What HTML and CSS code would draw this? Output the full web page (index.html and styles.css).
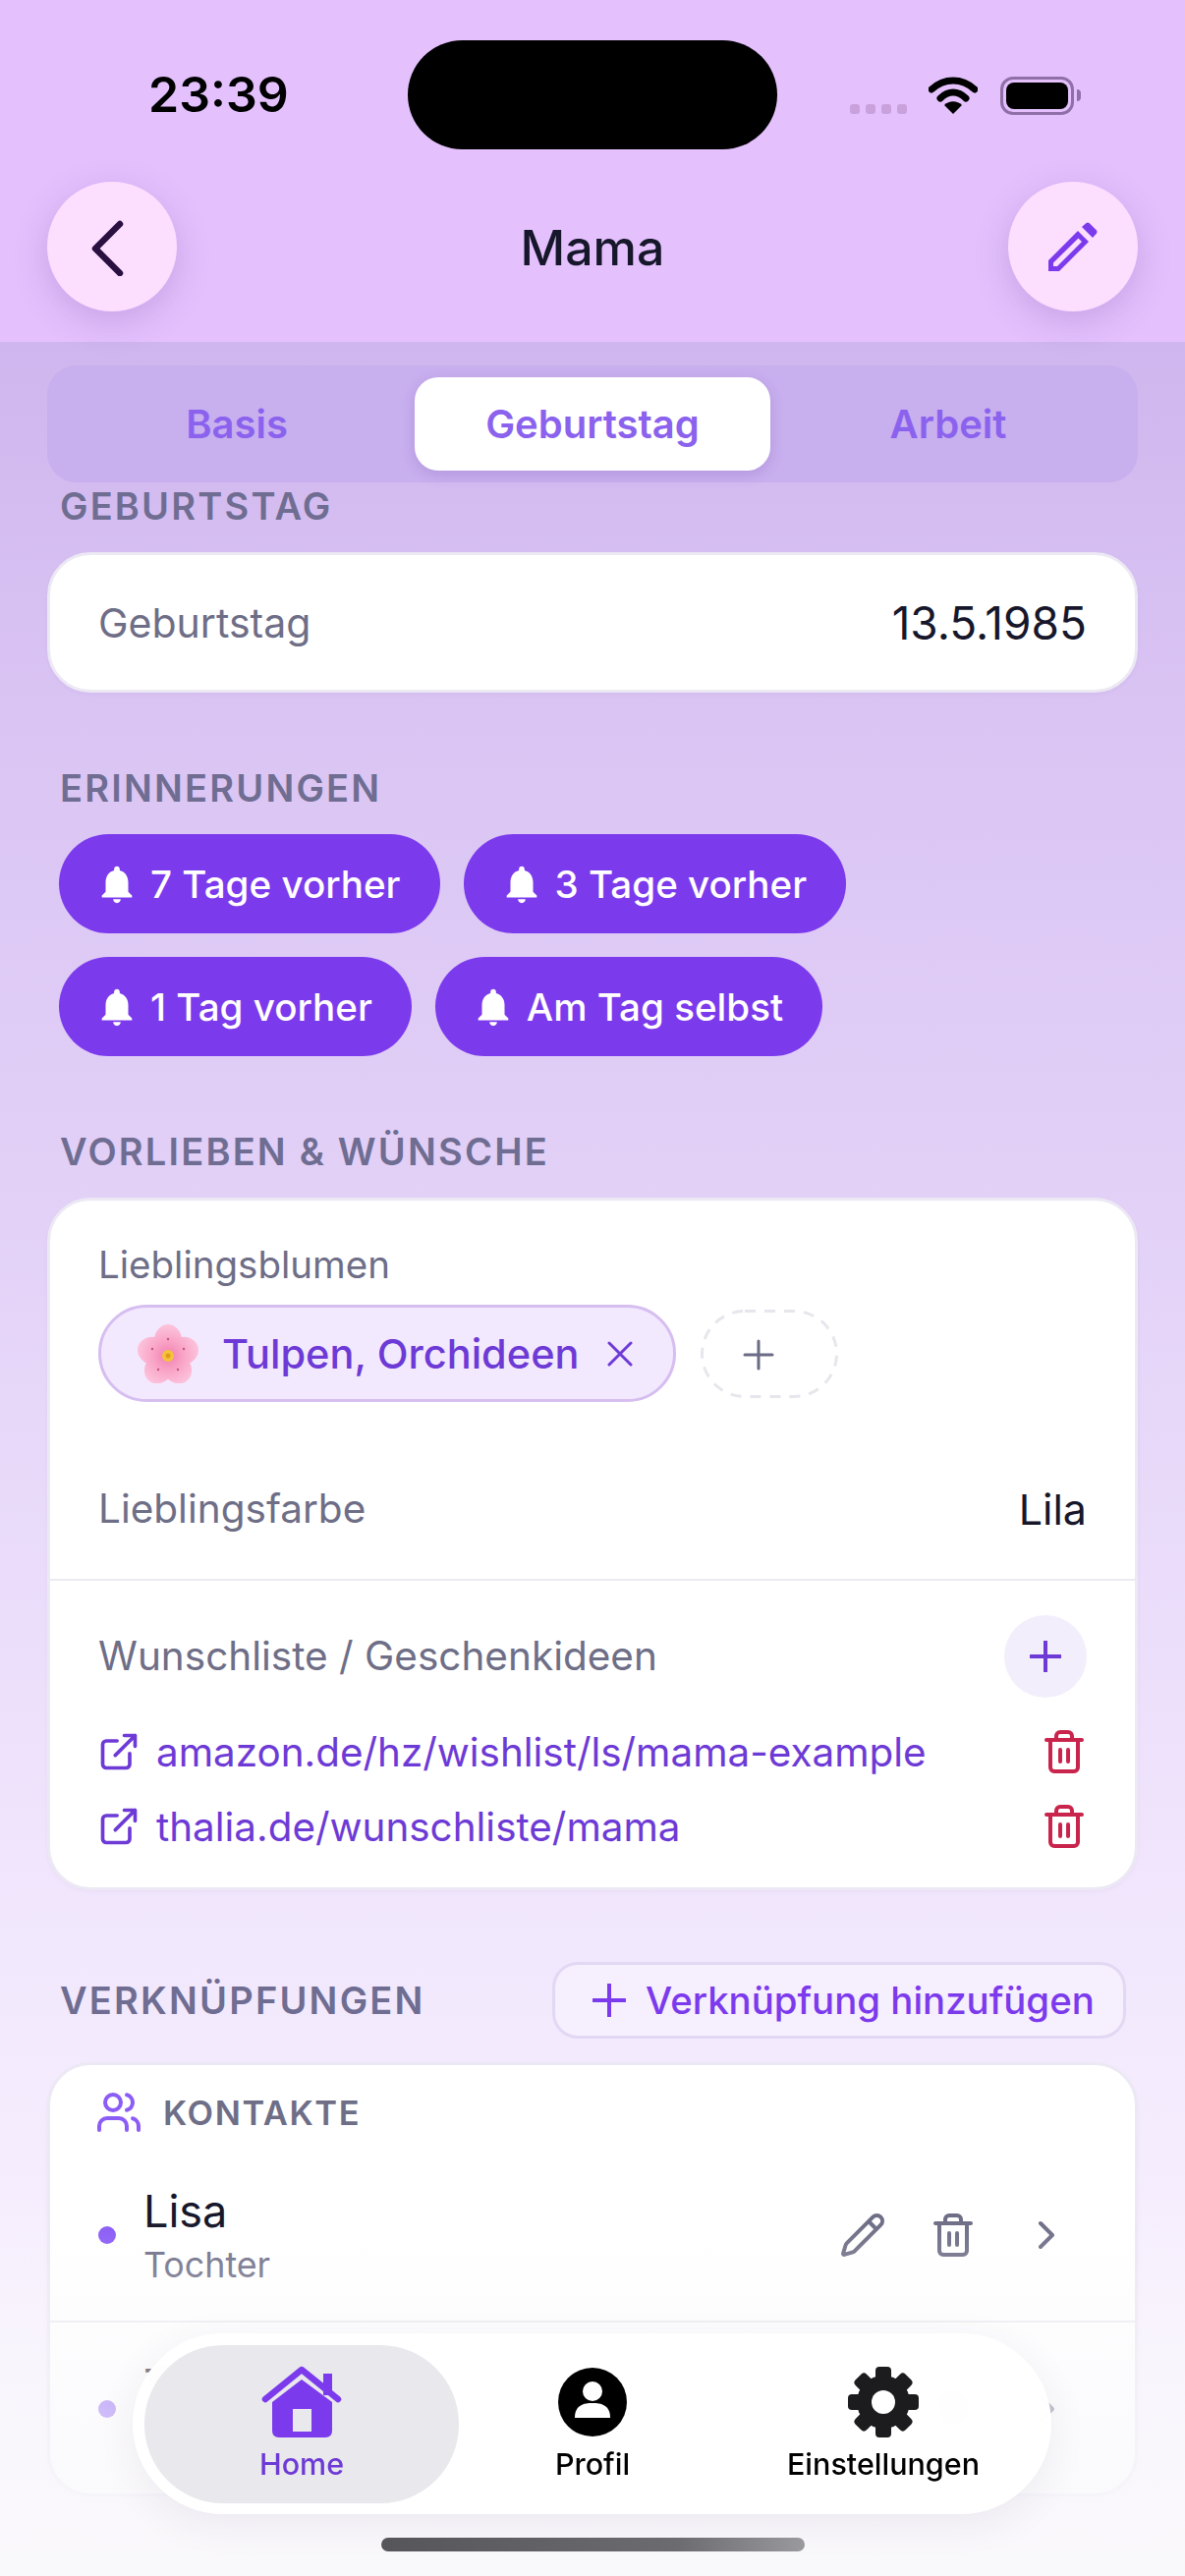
FILE: index.html
```html
<!DOCTYPE html>
<html lang="de">
<head>
    <meta charset="UTF-8">
    <meta name="viewport" content="width=device-width, initial-scale=1.0">
    <title>Mama</title>
    <link rel="stylesheet" href="styles.css">
</head>
<body>
<div class="screen">
    <div class="header">
        <div class="status">
            <div class="status-time">23:39</div>
            <div class="island"></div>
            <div class="status-icons">
                <div class="signal"><i></i><i></i><i></i><i></i></div>
                <svg class="wifi" viewBox="0 0 50 38"><path d="M3 13C16 1 34 1 47 13" fill="none" stroke="#000" stroke-width="7" stroke-linecap="round"/><path d="M12 22C20 14 30 14 38 22" fill="none" stroke="#000" stroke-width="7" stroke-linecap="round"/><path d="M16 29C21 24 29 24 34 29L25 38Z" fill="#000"/></svg>
                <div class="battery"><i></i></div>
                <div class="battery-nub"></div>
            </div>
        </div>
        <div class="nav">
            <div class="round-btn">
                <svg class="nav-back" viewBox="0 0 40 60"><polyline points="33,7 8,32 33,57" fill="none" stroke="#2a1040" stroke-width="6.500" stroke-linecap="round" stroke-linejoin="round"/></svg>
            </div>
            <h1 class="title">Mama</h1>
            <div class="round-btn">
                <svg class="nav-edit" viewBox="0 0 50 50"><path fill="#7c3aed" fill-rule="evenodd" d="M0 50V39L30 9 41 20 11 50ZM5 45H9L34 20 30.500 16.500 5 41.500Z"/><path fill="#7c3aed" d="M34 5 38.500 1Q40 0 41.500 1L49 8.500Q50 10 49 11.500L45 16Z"/></svg>
            </div>
        </div>
    </div>

    <div class="main">
        <div class="tabs">
            <div class="tab">Basis</div>
            <div class="tab active">Geburtstag</div>
            <div class="tab">Arbeit</div>
        </div>

        <div class="section-label">GEBURTSTAG</div>
        <div class="card birthday-card">
            <span class="field-label">Geburtstag</span>
            <span class="field-value birthday-value">13.5.1985</span>
        </div>

        <div class="section-label spaced">ERINNERUNGEN</div>
        <div class="chips">
            <div class="chip"><svg class="bell" viewBox="0 0 24 24"><path d="M12 22c1.100 0 2-.9 2-2h-4c0 1.100.9 2 2 2zm6-6v-5c0-3.070-1.630-5.640-4.500-6.320V4c0-.83-.67-1.500-1.500-1.500s-1.500.67-1.500 1.500v.68C7.640 5.360 6 7.920 6 11v5l-2 2v1h16v-1l-2-2z"/></svg>7 Tage vorher</div>
            <div class="chip"><svg class="bell" viewBox="0 0 24 24"><path d="M12 22c1.100 0 2-.9 2-2h-4c0 1.100.9 2 2 2zm6-6v-5c0-3.070-1.630-5.640-4.500-6.320V4c0-.83-.67-1.500-1.500-1.500s-1.500.67-1.500 1.500v.68C7.640 5.360 6 7.920 6 11v5l-2 2v1h16v-1l-2-2z"/></svg>3 Tage vorher</div>
            <div class="chip"><svg class="bell" viewBox="0 0 24 24"><path d="M12 22c1.100 0 2-.9 2-2h-4c0 1.100.9 2 2 2zm6-6v-5c0-3.070-1.630-5.640-4.500-6.320V4c0-.83-.67-1.500-1.500-1.500s-1.500.67-1.500 1.500v.68C7.640 5.360 6 7.920 6 11v5l-2 2v1h16v-1l-2-2z"/></svg>1 Tag vorher</div>
            <div class="chip"><svg class="bell" viewBox="0 0 24 24"><path d="M12 22c1.100 0 2-.9 2-2h-4c0 1.100.9 2 2 2zm6-6v-5c0-3.070-1.630-5.640-4.500-6.320V4c0-.83-.67-1.500-1.500-1.500s-1.500.67-1.500 1.500v.68C7.640 5.360 6 7.920 6 11v5l-2 2v1h16v-1l-2-2z"/></svg>Am Tag selbst</div>
        </div>

        <div class="section-label spaced">VORLIEBEN &amp; WÜNSCHE</div>
        <div class="card prefs-card">
            <div class="prefs-top">
                <div class="field-label small">Lieblingsblumen</div>
                <div class="flower-row">
                    <div class="flower-chip">
                        <svg class="flower" viewBox="0 0 62 60">
                            <defs><radialGradient id="petal" gradientUnits="userSpaceOnUse" cx="31" cy="32" r="32"><stop offset="0" stop-color="#f27fb0"/><stop offset="0.5" stop-color="#f9a5c8"/><stop offset="1" stop-color="#fcc4dc"/></radialGradient></defs>
                            <g fill="url(#petal)">
                                <ellipse cx="31" cy="16" rx="14" ry="16"/>
                                <ellipse cx="31" cy="16" rx="14" ry="16" transform="rotate(72 31 32)"/>
                                <ellipse cx="31" cy="16" rx="14" ry="16" transform="rotate(144 31 32)"/>
                                <ellipse cx="31" cy="16" rx="14" ry="16" transform="rotate(216 31 32)"/>
                                <ellipse cx="31" cy="16" rx="14" ry="16" transform="rotate(288 31 32)"/>
                            </g>
                            <g fill="#c2557f">
                                <circle cx="31" cy="15" r="1.200"/>
                                <circle cx="15" cy="25" r="1.200"/>
                                <circle cx="47" cy="25" r="1.200"/>
                                <circle cx="21" cy="46" r="1.200"/>
                                <circle cx="41" cy="46" r="1.200"/>
                            </g>
                            <circle cx="31" cy="32" r="6" fill="#f5c33b"/>
                            <circle cx="31" cy="32" r="2.500" fill="#e39a1e"/>
                        </svg>
                        <span>Tulpen, Orchideen</span>
                        <svg class="chip-x" viewBox="0 0 26 26"><path d="M2 2 24 24M24 2 2 24" stroke="#6d3ad6" stroke-width="3" stroke-linecap="round"/></svg>
                    </div>
                    <svg class="dashed-add" viewBox="0 0 140 90">
                        <rect x="1.500" y="1.500" width="137" height="87" rx="43.500" fill="none" stroke="#e6e6ec" stroke-width="3" stroke-dasharray="11 9"/>
                        <path d="M59 32V60M45 46H73" stroke="#6b6b85" stroke-width="3" stroke-linecap="round"/>
                    </svg>
                </div>
            </div>
            <div class="pref-row">
                <span class="field-label">Lieblingsfarbe</span>
                <span class="field-value">Lila</span>
            </div>
            <div class="wish-block">
                <div class="wish-head">
                    <span class="field-label">Wunschliste / Geschenkideen</span>
                    <div class="wish-add">
                        <svg class="wish-plus" viewBox="0 0 32 32"><path d="M16 1V31M1 16H31" stroke="#6d3ad6" stroke-width="4" stroke-linecap="round"/></svg>
                    </div>
                </div>
                <div class="wish-link">
                    <svg class="ext-icon" viewBox="0 0 24 24"><path d="M15 3h6v6M10 14 21 3M18 13v6a2 2 0 0 1-2 2H5a2 2 0 0 1-2-2V8a2 2 0 0 1 2-2h6"/></svg>
                    <span class="link-text">amazon.de/hz/wishlist/ls/mama-example</span>
                    <svg class="trash red" viewBox="0 0 24 24"><path d="M3 6h18M8 6V4a2 2 0 0 1 2-2h4a2 2 0 0 1 2 2v2M19 6v14a2 2 0 0 1-2 2H7a2 2 0 0 1-2-2V6M10 11v6M14 11v6"/></svg>
                </div>
                <div class="wish-link">
                    <svg class="ext-icon" viewBox="0 0 24 24"><path d="M15 3h6v6M10 14 21 3M18 13v6a2 2 0 0 1-2 2H5a2 2 0 0 1-2-2V8a2 2 0 0 1 2-2h6"/></svg>
                    <span class="link-text">thalia.de/wunschliste/mama</span>
                    <svg class="trash red" viewBox="0 0 24 24"><path d="M3 6h18M8 6V4a2 2 0 0 1 2-2h4a2 2 0 0 1 2 2v2M19 6v14a2 2 0 0 1-2 2H7a2 2 0 0 1-2-2V6M10 11v6M14 11v6"/></svg>
                </div>
            </div>
        </div>

        <div class="links-head">
            <div class="section-label">VERKNÜPFUNGEN</div>
            <div class="add-link-btn">
                <svg class="add-link-plus" viewBox="0 0 34 34"><path d="M17 1V33M1 17H33" stroke="#7c3aed" stroke-width="4" stroke-linecap="round"/></svg>
                Verknüpfung hinzufügen
            </div>
        </div>
        <div class="card contacts-card">
            <div class="contacts-head">
                <svg class="users-icon" viewBox="0 0 24 24"><path d="M16 21v-2a4 4 0 0 0-4-4H6a4 4 0 0 0-4 4v2M22 21v-2a4 4 0 0 0-3-3.870M16 3.130a4 4 0 0 1 0 7.750"/><circle cx="9" cy="7" r="4"/></svg>
                <span>KONTAKTE</span>
            </div>
            <div class="contact">
                <div class="contact-dot"></div>
                <div class="contact-info">
                    <div class="contact-name">Lisa</div>
                    <div class="contact-role">Tochter</div>
                </div>
                <svg class="row-icon edit" viewBox="0 0 24 24"><path d="M21.174 6.812a1 1 0 0 0-3.986-3.987L3.842 16.174a2 2 0 0 0-.5.83l-1.321 4.352a.5.5 0 0 0 .623.622l4.353-1.320a2 2 0 0 0 .83-.497zM15 5l4 4"/></svg>
                <svg class="row-icon" viewBox="0 0 24 24"><path d="M3 6h18M8 6V4a2 2 0 0 1 2-2h4a2 2 0 0 1 2 2v2M19 6v14a2 2 0 0 1-2 2H7a2 2 0 0 1-2-2V6M10 11v6M14 11v6"/></svg>
                <svg class="row-icon open" viewBox="0 0 24 24"><path d="m9 18 6-6-6-6"/></svg>
            </div>
            <div class="contact last">
                <div class="contact-dot"></div>
                <div class="contact-info">
                    <div class="contact-name">Tom</div>
                    <div class="contact-role">Sohn</div>
                </div>
                <svg class="row-icon edit" viewBox="0 0 24 24"><path d="M21.174 6.812a1 1 0 0 0-3.986-3.987L3.842 16.174a2 2 0 0 0-.5.83l-1.321 4.352a.5.5 0 0 0 .623.622l4.353-1.320a2 2 0 0 0 .83-.497zM15 5l4 4"/></svg>
                <svg class="row-icon" viewBox="0 0 24 24"><path d="M3 6h18M8 6V4a2 2 0 0 1 2-2h4a2 2 0 0 1 2 2v2M19 6v14a2 2 0 0 1-2 2H7a2 2 0 0 1-2-2V6M10 11v6M14 11v6"/></svg>
                <svg class="row-icon open" viewBox="0 0 24 24"><path d="m9 18 6-6-6-6"/></svg>
            </div>
        </div>
    </div>

    <!-- fade and floating tab bar lie over the scroll content -->
    <div class="bottom-fade"></div>
    <div class="tabbar">
        <div class="tabbar-item selected">
            <svg class="tabbar-icon" viewBox="0 0 82 74">
                <path d="M63 8H72V30H63Z" fill="#7c3aed"/>
                <path d="M4 34 41 4 78 34" fill="none" stroke="#7c3aed" stroke-width="6.500" stroke-linecap="round" stroke-linejoin="round"/>
                <path fill="#7c3aed" fill-rule="evenodd" d="M11 37 41 14 72 37V66Q72 73 65 73H18Q11 73 11 66ZM32 44V67H51V44Z"/>
            </svg>
            <span>Home</span>
        </div>
        <div class="tabbar-item">
            <svg class="tabbar-icon" viewBox="0 0 74 74">
                <circle cx="37" cy="37" r="35"/>
                <circle cx="37" cy="26" r="10" fill="#fff"/>
                <path d="M19 53C19 40 28 38 37 38S55 40 55 53Z" fill="#fff"/>
            </svg>
            <span>Profil</span>
        </div>
        <div class="tabbar-item">
            <svg class="tabbar-icon" viewBox="0 0 74 74">
                <g fill="#1c1c1e">
                    <circle cx="37" cy="37" r="27"/>
                    <rect x="29" y="1" width="16" height="16" rx="4"/>
                    <rect x="29" y="1" width="16" height="16" rx="4" transform="rotate(45 37 37)"/>
                    <rect x="29" y="1" width="16" height="16" rx="4" transform="rotate(90 37 37)"/>
                    <rect x="29" y="1" width="16" height="16" rx="4" transform="rotate(135 37 37)"/>
                    <rect x="29" y="1" width="16" height="16" rx="4" transform="rotate(180 37 37)"/>
                    <rect x="29" y="1" width="16" height="16" rx="4" transform="rotate(225 37 37)"/>
                    <rect x="29" y="1" width="16" height="16" rx="4" transform="rotate(270 37 37)"/>
                    <rect x="29" y="1" width="16" height="16" rx="4" transform="rotate(315 37 37)"/>
                </g>
                <circle cx="37" cy="37" r="12" fill="#fff"/>
            </svg>
            <span>Einstellungen</span>
        </div>
    </div>
    <div class="home-indicator"></div>
</div>
</body>
</html>
```

FILE: styles.css
```css
/* Reset default margin and padding */
* {
    margin: 0;
    padding: 0;
    box-sizing: border-box;
}

:root {
    --purple: #7c3aed;
    --link: #6d3ad6;
    --tab-text: #8b62ee;
    --muted: #6e6e87;
    --dark: #17172b;
}

body {
    font-family: "Inter", "Noto Sans", sans-serif;
    background: #fff;
}

.screen {
    position: relative;
    width: 1206px;
    height: 2622px;
    overflow: hidden;
}

/* Header */
.header {
    height: 348px;
    background: #e4c1fd;
    position: relative;
    z-index: 2;
}

.status {
    display: flex;
    align-items: flex-start;
    height: 185px;
    padding: 41px 0 0 151px;
}

.status-time {
    width: 264px;
    margin-top: 25px;
    font-size: 50px;
    line-height: 60px;
    font-weight: 600;
    color: #000;
}

.island {
    width: 376px;
    height: 111px;
    border-radius: 56px;
    background: #000;
}

.status-icons {
    display: flex;
    align-items: flex-start;
    margin: 37px 0 0 74px;
}

.signal {
    display: flex;
    gap: 6px;
    margin-top: 28px;
}

.signal i {
    display: block;
    width: 10px;
    height: 10px;
    border-radius: 3px;
    background: #c9a2dc;
}

.wifi {
    width: 50px;
    height: 38px;
    margin-left: 22px;
}

.battery {
    width: 75px;
    height: 39px;
    margin-left: 23px;
    padding: 3px;
    border: 3px solid #8f6fa8;
    border-radius: 13px;
}

.battery i {
    display: block;
    height: 100%;
    border-radius: 8px;
    background: #000;
}

.battery-nub {
    width: 4px;
    height: 12px;
    margin: 13px 0 0 3px;
    border-radius: 0 6px 6px 0;
    background: #8f6fa8;
}

.nav {
    display: flex;
    justify-content: space-between;
    align-items: center;
    padding: 0 48px;
}

.round-btn {
    display: flex;
    align-items: center;
    justify-content: center;
    width: 132px;
    height: 132px;
    border-radius: 50%;
    background: #fcdeff;
    box-shadow: 0 10px 36px rgba(90, 40, 140, 0.2);
}

.nav-back {
    width: 40px;
    height: 60px;
    margin-right: 10px;
}

.nav-edit {
    width: 50px;
    height: 50px;
}

.title {
    margin-top: 2px;
    font-size: 50px;
    line-height: 60px;
    font-weight: 500;
    color: var(--dark);
}

/* Scroll content */
.main {
    height: 2274px;
    padding: 24px 48px 0;
    background: linear-gradient(180deg, #cfb6ee 0, #d9c3f3 350px, #e2d0f7 850px, #f2e8fd 1650px, #fbf7fe 2274px);
}

.tabs {
    display: flex;
    margin-bottom: 1px;
    padding: 12px;
    height: 119px;
    border-radius: 30px;
    background: #c8afee;
}

.tab {
    flex: 1;
    display: flex;
    align-items: center;
    justify-content: center;
    font-size: 40px;
    font-weight: 600;
    color: var(--tab-text);
    border-radius: 24px;
}

.tab.active {
    background: #fff;
    box-shadow: 0 4px 14px rgba(90, 50, 150, 0.18);
}

.section-label {
    padding-left: 13px;
    margin-bottom: 24px;
    font-size: 38px;
    line-height: 46px;
    font-weight: 600;
    letter-spacing: 2.200px;
    color: #6f6d92;
}

.section-label.spaced {
    margin-top: 74px;
}

.card {
    background: #fff;
    border: 3px solid #ece8f4;
    border-radius: 44px;
    box-shadow: 0 2px 4px rgba(60, 40, 90, 0.03);
}

.birthday-card {
    display: flex;
    justify-content: space-between;
    align-items: center;
    height: 143px;
    padding: 0 49px;
}

.field-label {
    font-size: 40.500px;
    line-height: 50px;
    color: var(--muted);
}

.birthday-card .field-label {
    font-size: 41px;
}

.field-label.small {
    font-size: 38.500px;
}

.field-value {
    font-size: 43px;
    line-height: 50px;
    color: var(--dark);
}

.birthday-value {
    font-size: 46px;
}

/* Reminder chips */
.chips {
    display: flex;
    flex-wrap: wrap;
    gap: 24px;
    width: 900px;
    padding-left: 12px;
}

.chip {
    display: flex;
    align-items: center;
    height: 101px;
    padding: 0 40px 0 36px;
    border-radius: 51px;
    background: var(--purple);
    color: #fff;
    font-size: 38.600px;
    font-weight: 500;
}

.bell {
    width: 46px;
    height: 46px;
    margin-right: 11px;
    fill: #fff;
}

/* Preferences card */
.prefs-card {
    height: 705px;
    padding-top: 40px;
}

.prefs-top {
    padding: 0 49px;
}

.flower-row {
    display: flex;
    align-items: center;
    gap: 25px;
    margin-top: 16px;
}

.flower-chip {
    display: flex;
    align-items: center;
    width: 588px;
    height: 99px;
    padding-left: 37px;
    border: 3px solid #d6bef0;
    border-radius: 50px;
    background: #f3e9ff;
    color: var(--link);
    font-size: 41.500px;
    font-weight: 500;
    white-space: nowrap;
}

.flower {
    width: 62px;
    height: 60px;
    margin-right: 24px;
}

.chip-x {
    width: 26px;
    height: 26px;
    margin-left: 28px;
}

.dashed-add {
    width: 140px;
    height: 90px;
}

.pref-row {
    display: flex;
    justify-content: space-between;
    align-items: center;
    height: 182px;
    padding: 38px 49px 0;
    border-bottom: 2px solid #ecebf1;
}

.wish-block {
    padding: 35px 49px 0;
}

.wish-head {
    display: flex;
    justify-content: space-between;
    align-items: center;
    margin-bottom: 17px;
}

.wish-add {
    display: flex;
    align-items: center;
    justify-content: center;
    width: 84px;
    height: 84px;
    border-radius: 50%;
    background: #f3eefc;
}

.wish-plus {
    width: 32px;
    height: 32px;
}

.wish-link {
    display: flex;
    align-items: center;
    height: 76px;
}

.ext-icon {
    width: 44px;
    height: 44px;
    margin: 0 16px 0 -1px;
    fill: none;
    stroke: var(--link);
    stroke-width: 2;
    stroke-linecap: round;
    stroke-linejoin: round;
}

.link-text {
    flex: 1;
    font-size: 40.400px;
    font-weight: 400;
    color: var(--link);
}

.trash {
    width: 48px;
    height: 48px;
    margin-right: -1px;
    fill: none;
    stroke-width: 2;
    stroke-linecap: round;
    stroke-linejoin: round;
}

.trash.red {
    stroke: #c9244c;
}

/* Links section */
.links-head {
    display: flex;
    justify-content: space-between;
    align-items: center;
    margin: 73px 12px 24px 0;
}

.links-head .section-label {
    margin-bottom: 0;
}

.add-link-btn {
    display: flex;
    align-items: center;
    gap: 20px;
    width: 584px;
    height: 78px;
    padding-left: 38px;
    border: 3px solid #e3d8f3;
    border-radius: 26px;
    background: #f6effe;
    color: var(--purple);
    font-size: 38.400px;
    font-weight: 500;
}

.add-link-plus {
    width: 34px;
    height: 34px;
}

.contacts-card {
    height: 442px;
    padding-top: 25px;
}

.contacts-head {
    display: flex;
    align-items: center;
    gap: 21px;
    height: 46px;
    padding-left: 46px;
    margin-bottom: 15px;
    font-size: 34.500px;
    font-weight: 600;
    letter-spacing: 1.600px;
    color: var(--muted);
}

.users-icon {
    width: 48px;
    height: 48px;
    fill: none;
    stroke: #8b5cf6;
    stroke-width: 2;
    stroke-linecap: round;
    stroke-linejoin: round;
}

.contact {
    display: flex;
    align-items: center;
    gap: 46px;
    height: 176px;
    padding: 0 66px 0 49px;
    border-bottom: 2px solid #ecebf1;
}

.contact.last {
    border-bottom: none;
}

.contact-dot {
    width: 18px;
    height: 18px;
    margin-right: -18px;
    border-radius: 50%;
    background: #8b5cf6;
}

.contact-info {
    flex: 1;
}

.contact-name {
    font-size: 45px;
    line-height: 54px;
    color: var(--dark);
}

.contact-role {
    margin-top: 6px;
    font-size: 35.800px;
    line-height: 42px;
    color: var(--muted);
}

.row-icon {
    width: 48px;
    height: 48px;
    fill: none;
    stroke: var(--muted);
    stroke-width: 2;
    stroke-linecap: round;
    stroke-linejoin: round;
}

.row-icon.edit {
    margin-right: -2px;
}

.row-icon.open {
    margin-left: 1px;
}

/* Bottom overlay */
.bottom-fade {
    position: absolute;
    left: 0;
    right: 0;
    top: 2260px;
    bottom: 0;
    background: linear-gradient(180deg, rgba(249, 248, 251, 0) 0, rgba(249, 248, 251, 0.6) 190px, rgba(249, 248, 251, 0.97) 362px);
}

.tabbar {
    position: absolute;
    left: 135px;
    top: 2375px;
    display: flex;
    width: 935px;
    height: 184px;
    padding: 12px;
    border-radius: 92px;
    background: rgba(255, 255, 255, 0.95);
    backdrop-filter: blur(14px);
    box-shadow: 0 10px 40px rgba(60, 40, 90, 0.07);
}

.tabbar-item {
    display: flex;
    flex-direction: column;
    align-items: center;
    flex: none;
    width: 320px;
    height: 161px;
    padding-top: 21px;
    border-radius: 80px;
    font-size: 30.500px;
    line-height: 36px;
    font-weight: 500;
    color: #000;
}

.tabbar-item + .tabbar-item {
    margin-left: -24px;
}

.tabbar-item.selected {
    background: rgba(230, 230, 235, 0.9);
    color: var(--link);
}

.tabbar-icon {
    height: 74px;
    width: 82px;
    margin-bottom: 8px;
}

.home-indicator {
    position: absolute;
    left: 388px;
    top: 2583px;
    width: 431px;
    height: 14px;
    border-radius: 7px;
    background: linear-gradient(90deg, #55555a 0, #6c6c70 70%, #9a9a9e 100%);
}
```
